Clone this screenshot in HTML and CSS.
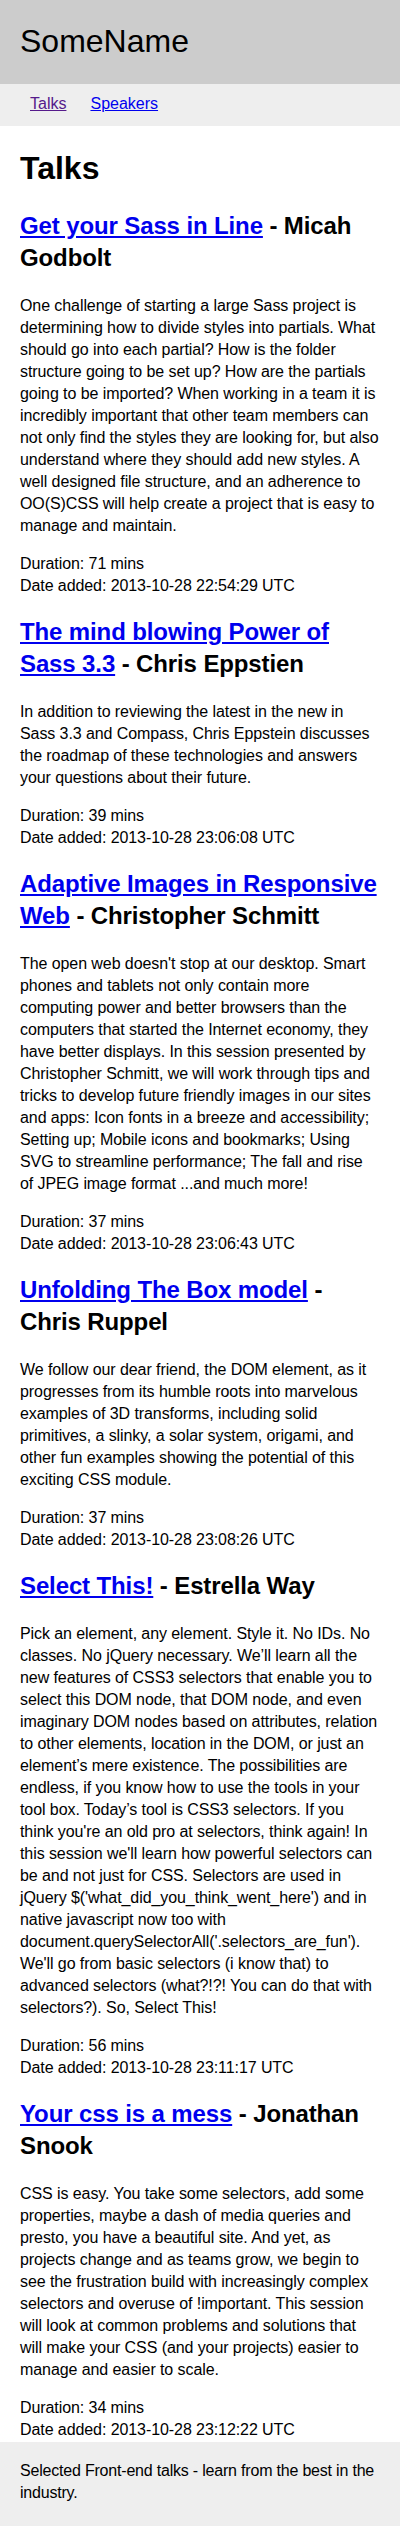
FILE: index.html
```html
<!DOCTYPE html>
<html lang="en">
<head>
<meta charset="utf-8">
<title>SomeName - Talks</title>
<link rel="stylesheet" href="styles.css">
</head>
<body>
<header class="site-header">
  <div class="site-name">SomeName</div>
</header>
<nav class="site-nav">
  <ul class="nav-list">
    <li class="nav-item"><a class="nav-link visited" href="#talks">Talks</a></li>
    <li class="nav-item"><a class="nav-link" href="#speakers">Speakers</a></li>
  </ul>
</nav>
<main class="content">
  <h1 class="page-title">Talks</h1>

  <article class="talk">
    <h2 class="talk-title"><a class="talk-link" href="#1">Get your Sass in Line</a> - Micah Godbolt</h2>
    <p class="talk-desc">One challenge of starting a large Sass project is determining how to divide styles into partials. What should go into each partial? How is the folder structure going to be set up? How are the partials going to be imported? When working in a team it is incredibly important that other team members can not only find the styles they are looking for, but also understand where they should add new styles. A well designed file structure, and an adherence to OO(S)CSS will help create a project that is easy to manage and maintain.</p>
    <div class="talk-meta"><div>Duration: 71 mins</div><div>Date added: 2013-10-28 22:54:29 UTC</div></div>
  </article>

  <article class="talk">
    <h2 class="talk-title"><a class="talk-link" href="#2">The mind blowing Power of Sass 3.3</a> - Chris Eppstien</h2>
    <p class="talk-desc">In addition to reviewing the latest in the new in Sass 3.3 and Compass, Chris Eppstein discusses the roadmap of these technologies and answers your questions about their future.</p>
    <div class="talk-meta"><div>Duration: 39 mins</div><div>Date added: 2013-10-28 23:06:08 UTC</div></div>
  </article>

  <article class="talk">
    <h2 class="talk-title"><a class="talk-link" href="#3">Adaptive Images in Responsive Web</a> - Christopher Schmitt</h2>
    <p class="talk-desc">The open web doesn't stop at our desktop. Smart phones and tablets not only contain more computing power and better browsers than the computers that started the Internet economy, they have better displays. In this session presented by Christopher Schmitt, we will work through tips and tricks to develop future friendly images in our sites and apps: Icon fonts in a breeze and accessibility; Setting up; Mobile icons and bookmarks; Using SVG to streamline performance; The fall and rise of JPEG image format ...and much more!</p>
    <div class="talk-meta"><div>Duration: 37 mins</div><div>Date added: 2013-10-28 23:06:43 UTC</div></div>
  </article>

  <article class="talk">
    <h2 class="talk-title"><a class="talk-link" href="#4">Unfolding The Box model</a> - Chris Ruppel</h2>
    <p class="talk-desc">We follow our dear friend, the DOM element, as it progresses from its humble roots into marvelous examples of 3D transforms, including solid primitives, a slinky, a solar system, origami, and other fun examples showing the potential of this exciting CSS module.</p>
    <div class="talk-meta"><div>Duration: 37 mins</div><div>Date added: 2013-10-28 23:08:26 UTC</div></div>
  </article>

  <article class="talk">
    <h2 class="talk-title"><a class="talk-link" href="#5">Select This!</a> - Estrella Way</h2>
    <p class="talk-desc">Pick an element, any element. Style it. No IDs. No classes. No jQuery necessary. We’ll learn all the new features of CSS3 selectors that enable you to select this DOM node, that DOM node, and even imaginary DOM nodes based on attributes, relation to other elements, location in the DOM, or just an element’s mere existence. The possibilities are endless, if you know how to use the tools in your tool box. Today’s tool is CSS3 selectors. If you think you're an old pro at selectors, think again! In this session we'll learn how powerful selectors can be and not just for CSS. Selectors are used in jQuery $('what_did_you_think_went_here') and in native javascript now too with document.querySelectorAll('.selectors_are_fun'). We'll go from basic selectors (i know that) to advanced selectors (what?!?! You can do that with selectors?). So, Select This!</p>
    <div class="talk-meta"><div>Duration: 56 mins</div><div>Date added: 2013-10-28 23:11:17 UTC</div></div>
  </article>

  <article class="talk">
    <h2 class="talk-title"><a class="talk-link" href="#6">Your css is a mess</a> - Jonathan Snook</h2>
    <p class="talk-desc">CSS is easy. You take some selectors, add some properties, maybe a dash of media queries and presto, you have a beautiful site. And yet, as projects change and as teams grow, we begin to see the frustration build with increasingly complex selectors and overuse of !important. This session will look at common problems and solutions that will make your CSS (and your projects) easier to manage and easier to scale.</p>
    <div class="talk-meta"><div>Duration: 34 mins</div><div>Date added: 2013-10-28 23:12:22 UTC</div></div>
  </article>
</main>
<footer class="site-footer">
  <p class="footer-text">Selected Front-end talks - learn from the best in the industry.</p>
</footer>
</body>
</html>
```
FILE: styles.css
```css
html, body {
  margin: 0;
  padding: 0;
}
body {
  font-family: "Liberation Sans", Arial, Helvetica, sans-serif;
  font-size: 16px;
  line-height: 22px;
  letter-spacing: -0.08px;
  color: #000;
  background: #fff;
}
.site-header {
  background: #ccc;
  padding: 23px 20px 25px;
}
.site-name {
  font-size: 32px;
  line-height: 36px;
  letter-spacing: 0;
}
.site-nav {
  background: #eee;
  padding: 9px 20px 11px;
}
.nav-list {
  list-style: none;
  margin: 0;
  padding: 0;
  display: flex;
  gap: 4px;
}
.nav-item {
  padding: 0 10px;
}
.nav-link {
  color: #0000ee;
  letter-spacing: 0;
}
.nav-link.visited {
  color: #551a8b;
}
.content {
  padding: 0 20px 1px;
  display: flow-root;
}
.page-title {
  font-size: 32px;
  line-height: 36px;
  font-weight: bold;
  letter-spacing: 0;
  margin: 24px 0;
}
.talk-title {
  font-size: 24px;
  line-height: 32px;
  font-weight: bold;
  letter-spacing: -0.12px;
  margin: 19px 0 21px;
}
.talk-link {
  color: #0000ee;
}
.talk-desc {
  margin: 0 0 16px;
}
.talk-meta {
  margin: 0;
}
.site-footer {
  background: #eee;
  padding: 18px 20px 22px;
}
.footer-text {
  margin: 0;
  letter-spacing: -0.2px;
}
```
